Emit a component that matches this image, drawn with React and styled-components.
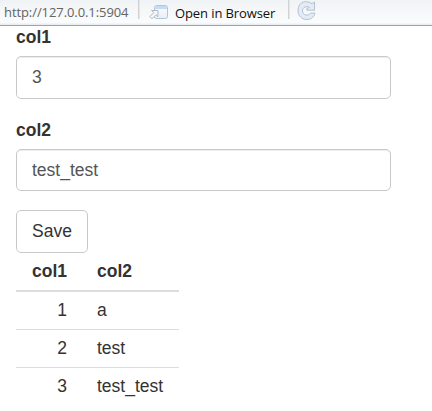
import React from 'react';
import styled, { createGlobalStyle } from 'styled-components';

const GlobalStyle = createGlobalStyle`
  * { box-sizing: border-box; }
  body {
    margin: 0;
    background: #fff;
    color: #333;
    font: 17.5px/25px "Liberation Sans", Arial, sans-serif;
    overflow: hidden;
  }
`;

const Toolbar = styled.header`
  display: flex;
  align-items: flex-start;
  height: 26px;
  padding-left: 4px;
  background: linear-gradient(#f0f3f5, #fbfcfd 23px, #e9edf2 24px);
  border-bottom: 1px solid #88a4dc;
  font: 13px/18px "Open Sans", "Segoe UI", sans-serif;
  white-space: nowrap;
`;

const Address = styled.span`
  width: 134px;
  padding-top: 3px;
  color: #646464;
  letter-spacing: -0.08px;
`;

const Separator = styled.span`
  width: 2px;
  height: 19px;
  background: linear-gradient(90deg, #d0d2d4 50%, #e4e6e8 50%);
`;

const OpenButton = styled.button`
  display: flex;
  align-items: flex-start;
  width: 148px;
  padding: 0 0 0 9px;
  border: 0;
  background: none;
  color: #111;
  font: inherit;
  letter-spacing: -0.1px;

  svg { margin: 5px 6px 0 0; flex: none; }
  span { padding-top: 4px; }
`;

const RefreshButton = styled.button`
  padding: 1px 0 0 7px;
  border: 0;
  background: none;
  line-height: 0;
`;

const Content = styled.main`
  padding: 0 16px;
`;

const Field = styled.div`
  width: 375px;
  margin-bottom: 19px;
`;

const Label = styled.label`
  display: block;
  height: ${(p) => p.$height}px;
  margin-bottom: 6px;
  font-weight: 700;
  line-height: ${(p) => p.$line}px;
`;

const Input = styled.input`
  display: block;
  width: 100%;
  height: ${(p) => p.$height}px;
  padding: 0 15px;
  border: 1px solid #c9c9c9;
  border-radius: 5px;
  outline: 0;
  background: #fff;
  box-shadow: inset 0 1px 1px rgba(0, 0, 0, 0.075);
  color: #555;
  font: inherit;
`;

const SaveButton = styled.button`
  display: block;
  width: 72px;
  height: 43px;
  padding: 0;
  border: 1px solid #c9c9c9;
  border-radius: 5px;
  background: #fff;
  color: #333;
  font: inherit;
`;

const Table = styled.table`
  width: 163px;
  border-spacing: 0;
  table-layout: fixed;
`;

const HeaderCell = styled.th`
  width: ${(p) => p.$width}px;
  height: 39px;
  padding: 0 15px;
  border-bottom: 2px solid #ddd;
  text-align: ${(p) => p.$align};
`;

const Cell = styled.td`
  height: 38px;
  padding: 0 15px;
  text-align: ${(p) => p.$align};

  tr:not(:last-child) > & { border-bottom: 1px solid #ddd; }
  tr:last-child > & { height: 37px; }
`;

const OpenIcon = () => (
  <svg width="20" height="15" viewBox="0 0 20 15">
    <defs>
      <linearGradient id="windowFill" x2="0" y2="1">
        <stop stopColor="#f9fcfe" />
        <stop offset="1" stopColor="#e8f0f7" />
      </linearGradient>
    </defs>
    <rect x="5.5" y=".5" width="13" height="13" rx="2" fill="url(#windowFill)" stroke="#b3c4d4" />
    <path d="M6 4V2.5Q6 1 7.5 1h9Q18 1 18 2.5V4z" fill="#c3dcf3" />
    <path d="M2.5 5.5H9v6.2L7 9.8l-4 4L.8 11.6l4-4z" fill="#f5f7f9" stroke="#b0b9c3" strokeLinejoin="round" />
  </svg>
);

const RefreshIcon = () => (
  <svg width="20" height="20" viewBox="0 0 20 20">
    <path
      d="M15 2.7 17.5 1v8.2h-7.7V7.8l2.6-1.4C9.4 4.7 5.6 6.2 5.5 9.8c.1 4.7 5.8 5.7 8.2 2.3h4.2C16.2 21.5 1.3 20.4 1 10 1-.2 10-1 15 2.7z"
      fill="#e2ebf6"
      stroke="#b5c1ce"
      strokeLinejoin="round"
    />
  </svg>
);

const rows = [[1, 'a'], [2, 'test'], [3, 'test_test']];

export default function App() {
  return (
    <>
      <GlobalStyle />
      <Toolbar>
        <Address>http://127.0.0.1:5904</Address>
        <Separator />
        <OpenButton><OpenIcon /><span>Open in Browser</span></OpenButton>
        <Separator />
        <RefreshButton aria-label="Refresh"><RefreshIcon /></RefreshButton>
      </Toolbar>
      <Content>
        <Field>
          <Label htmlFor="col1" $height={24} $line={23}>col1</Label>
          <Input id="col1" defaultValue="3" $height={43} />
        </Field>
        <Field>
          <Label htmlFor="col2" $height={25} $line={25}>col2</Label>
          <Input id="col2" defaultValue="test_test" $height={42} />
        </Field>
        <SaveButton>Save</SaveButton>
        <Table>
          <thead>
            <tr>
              <HeaderCell $width={66} $align="right">col1</HeaderCell>
              <HeaderCell $width={97} $align="left">col2</HeaderCell>
            </tr>
          </thead>
          <tbody>
            {rows.map(([id, value]) => (
              <tr key={id}>
                <Cell $align="right">{id}</Cell>
                <Cell $align="left">{value}</Cell>
              </tr>
            ))}
          </tbody>
        </Table>
      </Content>
    </>
  );
}
